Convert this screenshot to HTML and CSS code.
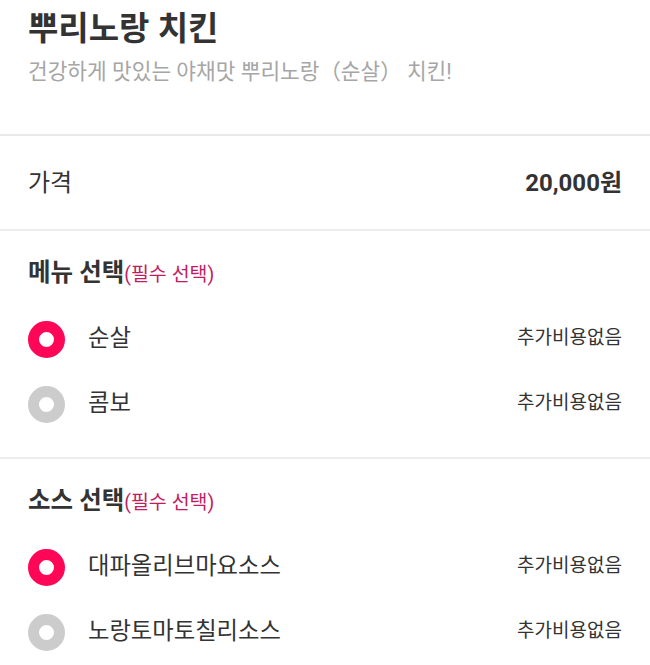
FILE: index.html
```html
<!DOCTYPE html>
<html lang="ko">
<head>
<meta charset="utf-8">
<link rel="stylesheet" href="styles.css">
</head>
<body>
<div class="page">
  <header class="head">
    <h1 class="title">뿌리노랑 치킨</h1>
    <p class="desc">건강하게 맛있는 야채맛 뿌리노랑（순살） 치킨!</p>
  </header>
  <section class="price">
    <span class="price-label">가격</span>
    <span class="price-value">20,000원</span>
  </section>
  <section class="group">
    <h2 class="group-title">메뉴 선택<span class="req">(필수 선택)</span></h2>
    <div class="opt">
      <span class="radio on"></span>
      <span class="opt-name">순살</span>
      <span class="opt-extra">추가비용없음</span>
    </div>
    <div class="opt">
      <span class="radio"></span>
      <span class="opt-name">콤보</span>
      <span class="opt-extra">추가비용없음</span>
    </div>
  </section>
  <section class="group">
    <h2 class="group-title">소스 선택<span class="req">(필수 선택)</span></h2>
    <div class="opt">
      <span class="radio on"></span>
      <span class="opt-name">대파올리브마요소스</span>
      <span class="opt-extra">추가비용없음</span>
    </div>
    <div class="opt">
      <span class="radio"></span>
      <span class="opt-name">노랑토마토칠리소스</span>
      <span class="opt-extra">추가비용없음</span>
    </div>
  </section>
</div>
</body>
</html>
```

FILE: styles.css
```css
* { box-sizing: border-box; }
html, body { margin: 0; padding: 0; background: #fff; }
body {
  font-family: "Roboto", "Noto Sans CJK KR", "Noto Sans", sans-serif;
  color: #333;
  overflow: hidden;
}
.page { width: 650px; }
.head {
  padding: 9px 28px 47px;
  border-bottom: 2px solid #e9e9e9;
}
.title {
  margin: 0;
  font-size: 33px;
  line-height: 40px;
  font-weight: 700;
  color: #333;
}
.desc {
  margin: 8px 0 0;
  font-size: 21.4px;
  line-height: 30px;
  color: #a6a6a6;
}
.price {
  height: 95px;
  padding: 0 28px 5px;
  display: flex;
  align-items: center;
  justify-content: space-between;
  border-bottom: 2px solid #ededed;
}
.price-label { font-size: 24px; color: #333; }
.price-value { font-size: 24px; font-weight: 700; color: #333; }
.group {
  padding: 28px 28px 20px;
  border-bottom: 2px solid #ededed;
}
.group-title {
  margin: 0 0 18px;
  font-size: 24.5px;
  line-height: 28px;
  font-weight: 700;
  color: #333;
}
.req {
  font-size: 19.5px;
  font-weight: 400;
  color: #c21d63;
}
.opt {
  height: 65px;
  display: flex;
  align-items: center;
}
.radio {
  width: 37px;
  height: 37px;
  border-radius: 50%;
  border: 11px solid #cccccc;
  background: #fff;
  flex: none;
}
.radio.on { border-color: #ff0657; }
.opt-name {
  margin-left: 23px;
  font-size: 23.3px;
  line-height: 30px;
  padding-bottom: 3px;
  color: #333;
  flex: 1;
}
.opt-extra {
  font-size: 19px;
  line-height: 26px;
  padding-bottom: 3px;
  color: #333;
}
```
